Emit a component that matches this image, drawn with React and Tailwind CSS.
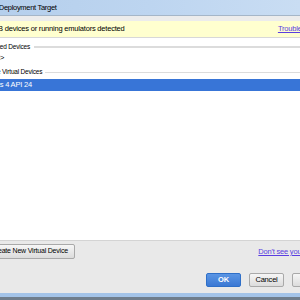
export default function App() {
  const font = { fontFamily: '"Liberation Sans", Arial, sans-serif' }
  const btn = 'h-[14px] w-[35px] rounded-[2px] border border-[#a9a9a9] bg-gradient-to-b from-[#f6f6f6] to-[#dcdcdc] text-[7.5px] flex items-center justify-center'
  return (
    <div className="w-[300px] h-[300px] overflow-hidden flex flex-col bg-[#e9e9e9] text-[7.5px] tracking-[-0.2px] text-black" style={font}>
      {/* Title bar */}
      <div className="h-[15px] shrink-0 flex items-center bg-gradient-to-r from-[#b5cfec] via-[#bdd5f0] to-[#c9ddf3] whitespace-nowrap">
        <span className="-ml-[22px] tracking-[-0.3px]">Select Deployment Target</span>
      </div>
      <div className="h-[1px] shrink-0 bg-[#a5b6c8]" />
      <div className="h-[5px] shrink-0 bg-[#ececec]" />

      {/* Warning banner */}
      <div className="h-[16px] shrink-0 flex items-center justify-between bg-[#ffffcf] whitespace-nowrap">
        <span className="-ml-[23px]">No USB devices or running emulators detected</span>
        <a className="text-[#5a3ee0] underline -mr-[19px]">Troubleshoot</a>
      </div>
      <div className="h-[1px] shrink-0 bg-[#d8d8d8]" />

      {/* Device list */}
      <div className="flex-1 bg-white flex flex-col whitespace-nowrap">
        <div className="h-[4px]" />
        <div className="flex items-center gap-[4px] h-[10px]">
          <span className="-ml-[23px] text-[6.5px]">Connected Devices</span>
          <div className="flex-1 h-[2px] bg-[#dcdcdc]" />
        </div>
        <div className="h-[12px] flex items-center">
          <span className="-ml-[20px]">&lt;none&gt;</span>
        </div>
        <div className="flex items-center gap-[3px] h-[12px] mt-[2px]">
          <span className="-ml-[24px] text-[6.5px]">Available Virtual Devices</span>
          <div className="flex-1 h-[1px] bg-[#dcdcdc]" />
        </div>
        <div className="h-[12px] mt-[1px] bg-[#3875d7] text-white flex items-center">
          <span className="-ml-[17px]">Nexus 4 API 24</span>
        </div>
      </div>
      <div className="h-[1px] shrink-0 bg-[#d4d4d4]" />

      {/* Footer */}
      <div className="h-[52px] shrink-0 bg-[#e9e9e9] flex flex-col whitespace-nowrap">
        <div className="flex items-center justify-between mt-[3px]">
          <button className="h-[15px] -ml-[16px] px-[6px] rounded-[2px] border border-[#a9a9a9] bg-gradient-to-b from-[#f6f6f6] to-[#dcdcdc] text-[7px] flex items-center">
            Create New Virtual Device
          </button>
          <a className="text-[#5a3ee0] underline -mr-[30px]">Don't see your device?</a>
        </div>
        <div className="flex items-center justify-end gap-[8px] mt-[14px] -mr-[27px]">
          <button className="h-[14px] w-[35px] rounded-[2px] border border-[#2e6fc8] bg-gradient-to-b from-[#5a95e4] to-[#3a78d4] text-white font-bold text-[7.5px]">
            OK
          </button>
          <button className={btn}>Cancel</button>
          <button className={btn}>Help</button>
        </div>
      </div>

      {/* Window bottom edge */}
      <div className="h-[4px] shrink-0 bg-[#a3c3e8]" />
      <div className="h-[3px] shrink-0 bg-[#6f7d8c]" />
    </div>
  )
}
